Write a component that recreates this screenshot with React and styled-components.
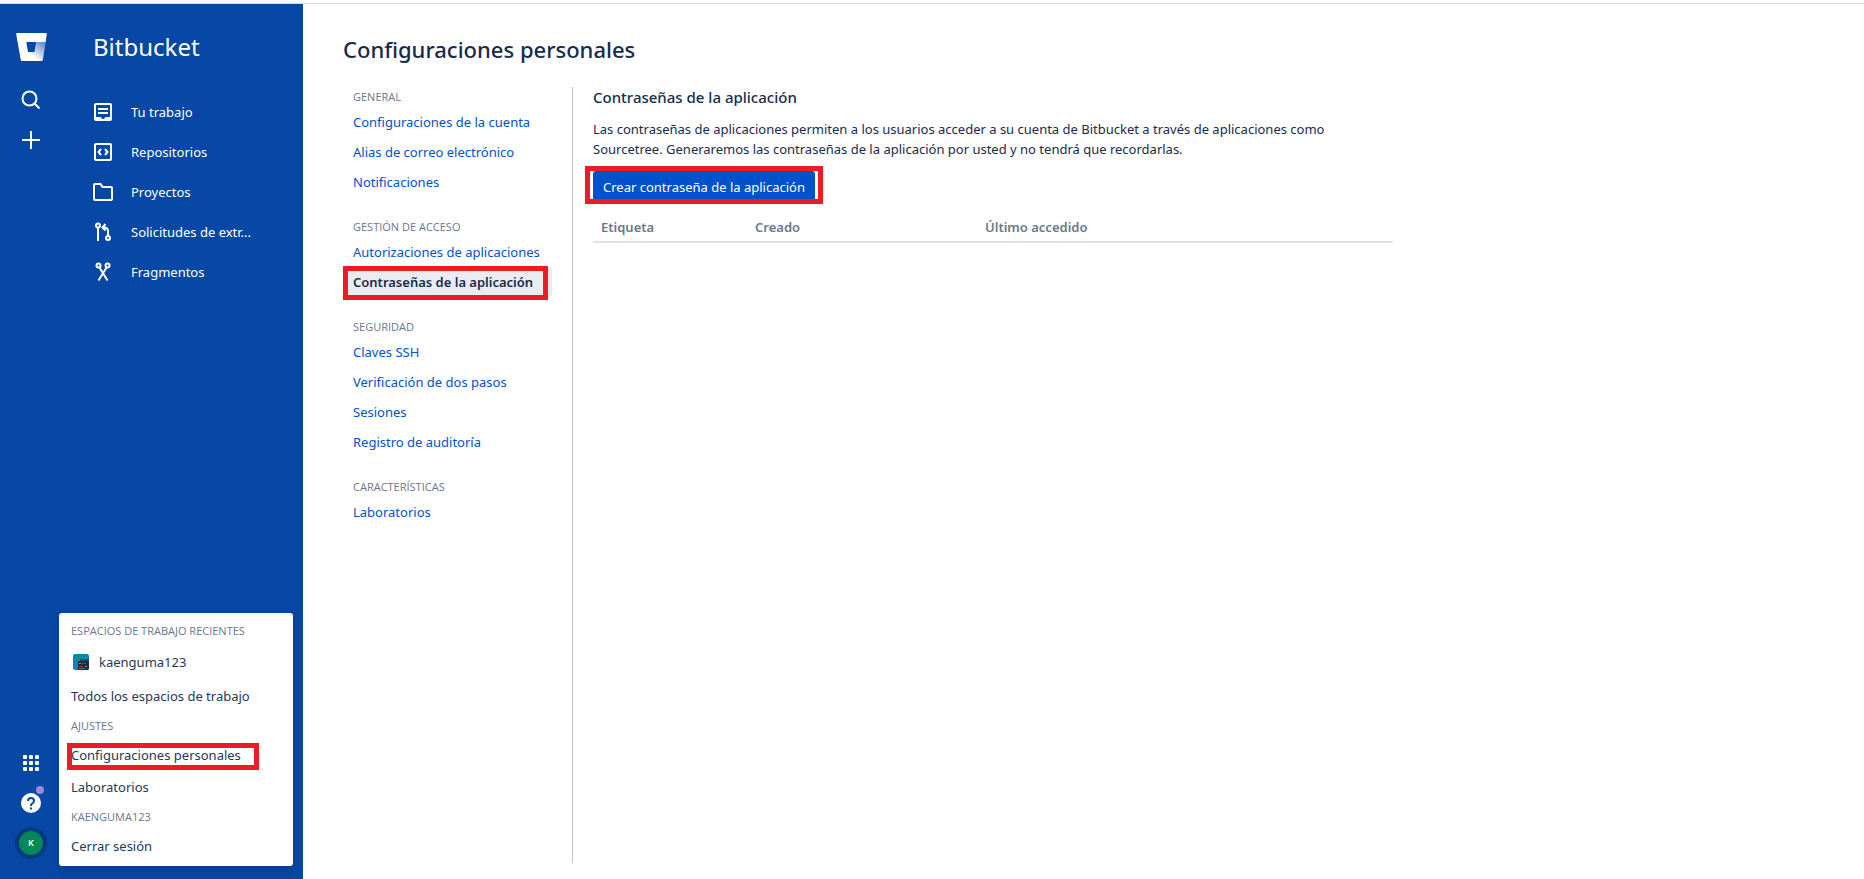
import React from "react";
import styled, { createGlobalStyle, css } from "styled-components";

const color = {
  brand: "#0747a6",
  action: "#0052cc",
  text: "#172b4d",
  subtle: "#6b778c",
  rule: "#dfe1e6",
  highlight: "#ed1c24",
};

const Global = createGlobalStyle`
  * { box-sizing: border-box; }
  body {
    margin: 0;
    background: #fff;
    color: ${color.text};
    font-family: "Noto Sans", "Open Sans", sans-serif;
    font-size: 13px;
    line-height: 20px;
  }
  h1, h2, h3, p, ul { margin: 0; padding: 0; }
  ul { list-style: none; }
  a { text-decoration: none; }
  button { font: inherit; border: 0; cursor: pointer; }
`;

const Page = styled.div`
  display: flex;
  min-height: 100vh;
  padding-top: 3px;
`;

const TopRule = styled.div`
  position: absolute;
  top: 3px;
  left: 0;
  right: 0;
  height: 1px;
  background: #dcdcdc;
`;

const Sidebar = styled.aside`
  position: relative;
  display: flex;
  flex: none;
  width: 303px;
  background: ${color.brand};
  color: #fff;
`;

const Rail = styled.div`
  display: flex;
  flex-direction: column;
  align-items: center;
  width: 62px;
  padding: 28px 0 16px;
`;

const RailButton = styled.button`
  position: relative;
  display: flex;
  align-items: center;
  justify-content: center;
  width: 40px;
  height: 40px;
  padding: 0;
  background: none;
  color: #fff;
`;

const RailLogo = styled.a`
  display: flex;
  align-items: center;
  justify-content: center;
  height: 32px;
  margin-bottom: 17px;
`;

const RailSpacer = styled.div`
  flex: 1;
`;

const Avatar = styled.span`
  display: flex;
  align-items: center;
  justify-content: center;
  width: 32px;
  height: 32px;
  border: 4px solid #093780;
  border-radius: 50%;
  background: #00875a;
  font-size: 9px;
  font-weight: 600;
`;

const ProductNav = styled.nav`
  flex: 1;
  min-width: 0;
  padding: 28px 0 0 29px;
`;

const ProductName = styled.div`
  padding-left: 2px;
  margin-bottom: 29px;
  font-size: 24px;
  line-height: 32px;
`;

const NavLink = styled.a`
  display: flex;
  align-items: center;
  gap: 16px;
  height: 40px;
  color: #fff;
  white-space: nowrap;
  svg { flex: none; }
`;

const marked = css`
  &::after {
    content: "";
    position: absolute;
    inset: ${(p) => p.$mark};
    border: 5px solid ${color.highlight};
    pointer-events: none;
  }
`;

const Popup = styled.div`
  position: absolute;
  left: 59px;
  right: 10px;
  bottom: 13px;
  display: flex;
  flex-direction: column;
  gap: 10px;
  padding: 8px 12px 10px;
  border-radius: 3px;
  background: #fff;
  box-shadow: 0 4px 8px rgba(9, 30, 66, 0.25);
`;

const PopupGroup = styled.section`
  display: flex;
  flex-direction: column;
  align-items: flex-start;
  gap: 12px;
`;

const PopupHeading = styled.h3`
  margin-bottom: -3px;
  font-family: "Open Sans", "Noto Sans", sans-serif;
  font-size: 11px;
  font-weight: 400;
  line-height: 20px;
  color: ${color.subtle};
`;

const PopupLink = styled.a`
  position: relative;
  display: flex;
  align-items: center;
  gap: 10px;
  color: #253858;
  ${(p) => p.$mark && marked}
`;

const WorkspaceLink = styled(PopupLink)`
  height: 24px;
  padding-left: 2px;
`;

const Main = styled.main`
  display: flex;
  flex: 1;
  flex-direction: column;
  min-width: 0;
  padding: 30px 40px 16px;
`;

const Title = styled.h1`
  margin-bottom: 22px;
  font-size: 22px;
  font-weight: 500;
  line-height: 32px;
`;

const Columns = styled.div`
  display: flex;
  flex: 1;
`;

const SettingsNav = styled.nav`
  display: flex;
  flex: none;
  flex-direction: column;
  gap: 20px;
  width: 230px;
  padding-right: 20px;
  border-right: 1px solid #c1c7d0;
`;

const GroupHeading = styled.h3`
  padding-left: 10px;
  font-family: "Open Sans", "Noto Sans", sans-serif;
  font-size: 11px;
  font-weight: 500;
  line-height: 20px;
  color: ${color.subtle};
`;

const SettingsLink = styled.a`
  position: relative;
  display: block;
  padding: 5px 10px;
  border-radius: 3px;
  color: ${(p) => (p.$selected ? color.text : color.action)};
  background: ${(p) => (p.$selected ? "#ebecf0" : "none")};
  font-weight: ${(p) => (p.$selected ? 600 : 400)};
  white-space: nowrap;
  ${(p) => p.$mark && marked}
`;

const Content = styled.section`
  flex: 1;
  max-width: 820px;
  padding-left: 20px;
`;

const SectionTitle = styled.h2`
  margin-bottom: 12px;
  font-size: 15px;
  font-weight: 500;
  line-height: 20px;
`;

const Intro = styled.p`
  max-width: 760px;
  margin-bottom: 12px;
`;

const Marker = styled.div`
  position: relative;
  width: max-content;
  ${marked}
`;

const PrimaryButton = styled.button`
  display: block;
  height: 32px;
  padding: 0 10px;
  border-radius: 3px;
  background: ${color.action};
  color: #fff;
`;

const Table = styled.table`
  width: 100%;
  margin-top: 7px;
  border-spacing: 0;
  table-layout: fixed;
  th {
    padding: 7px 8px 4px;
    border-bottom: 2px solid ${color.rule};
    font-weight: 600;
    text-align: left;
    color: ${color.subtle};
  }
`;

const Icon = ({ children, size = 24 }) => (
  <svg width={size} height={size} viewBox="0 0 24 24" fill="none" stroke="currentColor" strokeWidth="2" aria-hidden="true">
    {children}
  </svg>
);

const BitbucketLogo = () => (
  <svg width="31" height="28" viewBox="0 0 31 28" aria-hidden="true">
    <defs>
      <linearGradient id="shade" x1="29" y1="8" x2="17" y2="24" gradientUnits="userSpaceOnUse">
        <stop offset="0" stopColor="#0747a6" stopOpacity="0.7" />
        <stop offset="1" stopColor="#0747a6" stopOpacity="0" />
      </linearGradient>
    </defs>
    <path fillRule="evenodd" fill="#fff" d="M1 0H30Q31 0 30.800 1.200L26.800 27Q26.600 28 25.500 28H6Q5 28 4.800 27L.2 1.200Q0 0 1 0ZM10.300 9L12 19H18.500L20.200 9Z" />
    <path fill="url(#shade)" d="M20.200 9H29.600L26.800 27Q26.600 28 25.500 28H5.500L12 19H18.500Z" />
  </svg>
);

const navItems = [
  {
    label: "Tu trabajo",
    icon: (
      <Icon>
        <path d="M4 17H9.500Q10.500 19 12 19T14.500 17H20V20H4Z" fill="currentColor" stroke="none" />
        <rect x="4" y="4" width="16" height="16" rx="1" />
        <path d="M7 9H17M7 13H17" />
      </Icon>
    ),
  },
  {
    label: "Repositorios",
    icon: (
      <Icon>
        <rect x="4" y="4" width="16" height="16" rx="1" />
        <path d="M10 9L7.500 12L10 15M14 9L16.500 12L14 15" />
      </Icon>
    ),
  },
  {
    label: "Proyectos",
    icon: (
      <Icon>
        <path d="M3 5Q3 4 4 4H9.500L11.500 7H20Q21 7 21 8V19Q21 20 20 20H4Q3 20 3 19Z" />
      </Icon>
    ),
  },
  {
    label: "Solicitudes de extr...",
    icon: (
      <Icon>
        <circle cx="7" cy="5.500" r="2" />
        <circle cx="17" cy="18" r="2" />
        <path d="M7 7.500V21M17 16V11Q17 7.500 13 7.500H11.500M14.500 4L11.500 7.500L14.500 10.500" />
      </Icon>
    ),
  },
  {
    label: "Fragmentos",
    icon: (
      <Icon>
        <circle cx="7.500" cy="5.500" r="2" />
        <circle cx="16.500" cy="5.500" r="2" />
        <path d="M8.500 7.500L16.500 20.500M15.500 7.500L7.500 20.500" />
      </Icon>
    ),
  },
];

const settingsGroups = [
  { heading: "GENERAL", links: ["Configuraciones de la cuenta", "Alias de correo electrónico", "Notificaciones"] },
  { heading: "GESTIÓN DE ACCESO", links: ["Autorizaciones de aplicaciones", "Contraseñas de la aplicación"] },
  { heading: "SEGURIDAD", links: ["Claves SSH", "Verificación de dos pasos", "Sesiones", "Registro de auditoría"] },
  { heading: "CARACTERÍSTICAS", links: ["Laboratorios"] },
];

const currentPage = "Contraseñas de la aplicación";

const WorkspaceIcon = () => (
  <svg width="16" height="16" viewBox="0 0 16 16" aria-hidden="true">
    <rect width="16" height="16" rx="2" fill="#008da6" />
    <path d="M5 5H16V14Q16 16 14 16H5Z" fill="#172b4d" />
    <path d="M5 5H16V7H5Z" fill="#344563" />
    <path d="M5 6H7" stroke="#ffc400" strokeOpacity="0.7" />
    <path d="M6 9.500H8M12 12.500H14" stroke="#c1c7d0" strokeOpacity="0.7" />
    <path d="M9 9.500H13M6 12.500H10" stroke="#de350b" strokeOpacity="0.8" />
    <path d="M6 14.500H12" stroke="#5e6c84" />
  </svg>
);

const GlobalRail = () => (
  <Rail>
    <RailLogo href="#" aria-label="Bitbucket">
      <BitbucketLogo />
    </RailLogo>
    <RailButton aria-label="Buscar">
      <Icon>
        <circle cx="10.500" cy="10.500" r="7" />
        <path d="M15.500 15.500L20.500 20.500" />
      </Icon>
    </RailButton>
    <RailButton aria-label="Crear">
      <Icon>
        <path d="M12 3V21M3 12H21" />
      </Icon>
    </RailButton>
    <RailSpacer />
    <RailButton aria-label="Aplicaciones">
      <svg width="16" height="16" viewBox="0 0 16 16" fill="currentColor" aria-hidden="true">
        {[0, 6, 12].map((y) => [0, 6, 12].map((x) => <rect key={`${x}-${y}`} x={x} y={y} width="4" height="4" rx="1" />))}
      </svg>
    </RailButton>
    <RailButton aria-label="Ayuda">
      <svg width="40" height="40" viewBox="0 0 40 40" fill="none" aria-hidden="true">
        <circle cx="20" cy="20" r="10" fill="#fff" />
        <path d="M17 18Q17 15 20 15T23 18Q23 19.500 21.500 20.300T20 22.500V23" stroke="#0747a6" strokeWidth="2" />
        <rect x="19" y="24.500" width="2" height="2" fill="#0747a6" />
        <circle cx="29" cy="7" r="6" fill="#0747a6" />
        <circle cx="29" cy="7" r="4" fill="#998dd9" />
      </svg>
    </RailButton>
    <RailButton aria-label="Tu perfil">
      <Avatar>K</Avatar>
    </RailButton>
  </Rail>
);

const ProfilePopup = () => (
  <Popup>
    <PopupGroup>
      <PopupHeading>ESPACIOS DE TRABAJO RECIENTES</PopupHeading>
      <WorkspaceLink href="#">
        <WorkspaceIcon />
        kaenguma123
      </WorkspaceLink>
      <PopupLink href="#">Todos los espacios de trabajo</PopupLink>
    </PopupGroup>
    <PopupGroup>
      <PopupHeading>AJUSTES</PopupHeading>
      <PopupLink href="#" $mark="-2px -18px -5px -4px">Configuraciones personales</PopupLink>
      <PopupLink href="#">Laboratorios</PopupLink>
    </PopupGroup>
    <PopupGroup>
      <PopupHeading>KAENGUMA123</PopupHeading>
      <PopupLink href="#">Cerrar sesión</PopupLink>
    </PopupGroup>
  </Popup>
);

export default function App() {
  return (
    <>
      <Global />
      <Page>
        <Sidebar>
          <GlobalRail />
          <ProductNav>
            <ProductName>Bitbucket</ProductName>
            {navItems.map((item) => (
              <NavLink href="#" key={item.label}>
                {item.icon}
                <span>{item.label}</span>
              </NavLink>
            ))}
          </ProductNav>
          <ProfilePopup />
        </Sidebar>
        <Main>
          <Title>Configuraciones personales</Title>
          <Columns>
            <SettingsNav>
              {settingsGroups.map((group) => (
                <div key={group.heading}>
                  <GroupHeading>{group.heading}</GroupHeading>
                  <ul>
                    {group.links.map((link) => {
                      const selected = link === currentPage;
                      return (
                        <li key={link}>
                          <SettingsLink href="#" $selected={selected} $mark={selected && "-1px 4px -3px 0"}>
                            {link}
                          </SettingsLink>
                        </li>
                      );
                    })}
                  </ul>
                </div>
              ))}
            </SettingsNav>
            <Content>
              <SectionTitle>Contraseñas de la aplicación</SectionTitle>
              <Intro>
                Las contraseñas de aplicaciones permiten a los usuarios acceder a su cuenta de Bitbucket a través de
                aplicaciones como Sourcetree. Generaremos las contraseñas de la aplicación por usted y no tendrá que
                recordarlas.
              </Intro>
              <Marker $mark="-5px -8px -1px">
                <PrimaryButton>Crear contraseña de la aplicación</PrimaryButton>
              </Marker>
              <Table>
                <colgroup>
                  <col width="154" />
                  <col width="230" />
                  <col />
                </colgroup>
                <thead>
                  <tr>
                    <th>Etiqueta</th>
                    <th>Creado</th>
                    <th>Último accedido</th>
                  </tr>
                </thead>
              </Table>
            </Content>
          </Columns>
        </Main>
      </Page>
      <TopRule />
    </>
  );
}
